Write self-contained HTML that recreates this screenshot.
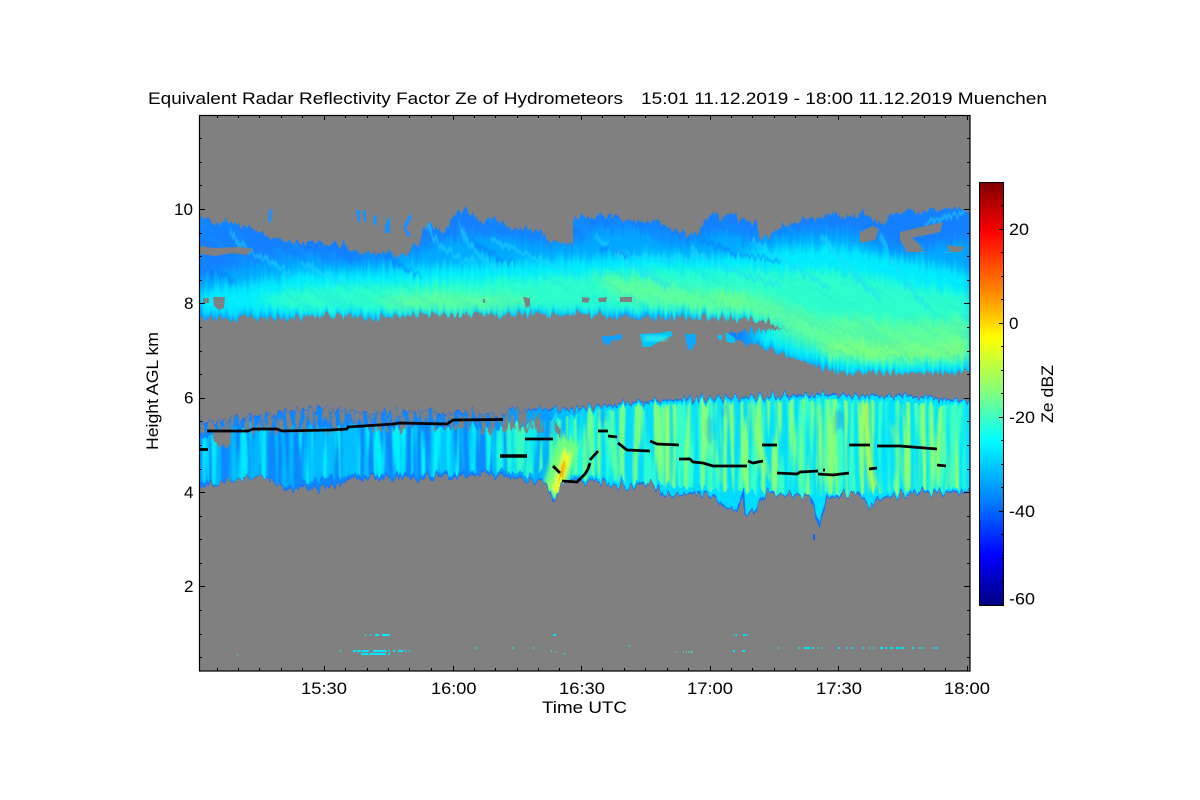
<!DOCTYPE html>
<html><head><meta charset="utf-8"><title>Equivalent Radar Reflectivity Factor</title>
<style>
html,body{margin:0;padding:0;background:#fff;width:1200px;height:800px;overflow:hidden}
svg{display:block}
text{font-family:"Liberation Sans",sans-serif;font-size:17px;fill:#000}
</style></head><body>
<svg width="1200" height="800" viewBox="0 0 1200 800" xmlns="http://www.w3.org/2000/svg">
<defs>
<path id="pu" d="M199,218 L215,221 230,223 245,226 260,232 270,238 280,242 295,243 310,243 325,243 337,242 353,247 363,255 375,253 390,253 400,256 407,258 413,245 420,242 424,228 431,224 437,230 443,233 450,222 457,213 467,210 472,217 480,221 490,218 500,220 510,228 525,229 537,230 548,238 557,243 567,243 573,240 573,222 581,217 590,218 602,216 613,215 620,219 627,223 640,221 650,223 660,222 670,228 680,232 690,235 697,233 705,222 713,215 722,219 733,213 738,220 748,222 757,223 760,240 768,236 773,232 782,227 790,225 803,217 815,219 833,215 848,217 863,213 873,220 885,222 893,213 905,213 923,210 940,211 957,208 967,213 970,215 L970,370 957,373 940,373 910,373 870,373 837,372 817,367 803,360 780,353 760,347 737,340 726,334 737,332 770,330 800,329 780,329 770,322 717,318 677,318 650,318 623,318 590,314 557,315 490,315 453,314 370,318 320,315 290,319 240,318 199,319 Z"/>
<path id="pl" d="M199,430 L203,419 233,420 247,417 285,412 323,408 357,413 397,412 423,412 470,414 503,415 510,410 557,410 590,408 640,402 680,400 723,398 770,397 823,395 880,396 923,397 970,402 L970,492 923,492 880,498 870,507 857,492 827,498 820,527 810,495 793,495 767,493 753,512 745,512 743,492 737,510 727,510 713,495 690,493 665,497 653,483 630,487 590,480 575,479 562,482 553,502 547,485 537,480 490,475 423,477 357,477 323,488 290,488 257,476 223,482 199,488 Z"/>
<clipPath id="cu"><use href="#pu"/></clipPath>
<clipPath id="cl"><use href="#pl"/></clipPath>
<clipPath id="cli"><path d="M199,438 L250,426 500,428 560,418 590,412 640,406 723,402 823,399 970,405 L970,488 880,492 820,495 720,490 630,482 590,476 500,472 357,474 290,484 199,483 Z"/></clipPath>
<clipPath id="plot"><rect x="199" y="115" width="771" height="556"/></clipPath>
<linearGradient id="cb" x1="0" y1="0" x2="0" y2="1">
<stop offset="0" stop-color="#800000"/><stop offset=".118" stop-color="#ff0000"/><stop offset=".277" stop-color="#ff9a00"/><stop offset=".367" stop-color="#ffff00"/><stop offset=".498" stop-color="#80ff80"/><stop offset=".609" stop-color="#00ffff"/><stop offset=".751" stop-color="#0080ff"/><stop offset=".882" stop-color="#0000ff"/><stop offset="1" stop-color="#000080"/>
</linearGradient>
<linearGradient id="lb" gradientUnits="userSpaceOnUse" x1="199" y1="0" x2="970" y2="0">
<stop offset="0" stop-color="#0c88ff"/><stop offset=".36" stop-color="#0c88ff"/><stop offset=".43" stop-color="#00a8ff"/><stop offset=".52" stop-color="#00d8ff"/><stop offset="1" stop-color="#00e4ff"/>
</linearGradient>
<linearGradient id="ls1" gradientUnits="userSpaceOnUse" x1="199" y1="0" x2="970" y2="0">
<stop offset="0" stop-color="#00b4ff"/><stop offset=".36" stop-color="#00c8ff"/><stop offset=".46" stop-color="#10f8e8"/><stop offset=".6" stop-color="#30ffd0"/><stop offset="1" stop-color="#40ffc0"/>
</linearGradient>
<linearGradient id="ls2" gradientUnits="userSpaceOnUse" x1="199" y1="0" x2="970" y2="0">
<stop offset="0" stop-color="#00e8ff"/><stop offset=".36" stop-color="#00f4f8"/><stop offset=".46" stop-color="#60ff98"/><stop offset=".6" stop-color="#80ff80"/><stop offset="1" stop-color="#90ff70"/>
</linearGradient>
<filter id="b2" x="-20%" y="-20%" width="140%" height="140%"><feGaussianBlur stdDeviation="2"/></filter>
<filter id="b5" filterUnits="userSpaceOnUse" x="150" y="150" width="870" height="300"><feGaussianBlur stdDeviation="5"/></filter>
<filter id="b3" filterUnits="userSpaceOnUse" x="150" y="150" width="870" height="400"><feGaussianBlur stdDeviation="2"/></filter>
<filter id="b1" filterUnits="userSpaceOnUse" x="150" y="150" width="870" height="400"><feGaussianBlur stdDeviation="1.2"/></filter>
<filter id="jagU" filterUnits="userSpaceOnUse" x="199" y="180" width="771" height="220" color-interpolation-filters="sRGB">
<feTurbulence type="fractalNoise" baseFrequency=".28 .03" numOctaves="2" seed="4" result="n"/>
<feColorMatrix in="n" values="1 0 0 0 0 0 0 0 0 .5 0 0 1 0 0 0 0 0 0 1" result="m"/>
<feDisplacementMap in="SourceGraphic" in2="m" scale="16" xChannelSelector="G" yChannelSelector="R"/>
</filter>
<filter id="jagL" filterUnits="userSpaceOnUse" x="199" y="380" width="771" height="170" color-interpolation-filters="sRGB">
<feTurbulence type="fractalNoise" baseFrequency=".24 .02" numOctaves="2" seed="9" result="n"/>
<feColorMatrix in="n" values="1 0 0 0 0 0 0 0 0 .5 0 0 1 0 0 0 0 0 0 1" result="m"/>
<feDisplacementMap in="SourceGraphic" in2="m" scale="18" xChannelSelector="G" yChannelSelector="R"/>
</filter>
<filter id="st1" filterUnits="userSpaceOnUse" x="199" y="380" width="771" height="170" color-interpolation-filters="sRGB">
<feTurbulence type="fractalNoise" baseFrequency=".14 .008" numOctaves="2" seed="3"/>
<feColorMatrix values="0 0 0 0 0 0 0 0 0 0 0 0 0 0 0 6 0 0 0 -2.6"/>
<feComposite in="SourceGraphic" operator="in"/>
<feGaussianBlur stdDeviation=".8 0"/>
</filter>
<filter id="st2" filterUnits="userSpaceOnUse" x="199" y="380" width="771" height="170" color-interpolation-filters="sRGB">
<feTurbulence type="fractalNoise" baseFrequency=".18 .008" numOctaves="2" seed="12"/>
<feColorMatrix values="0 0 0 0 0 0 0 0 0 0 0 0 0 0 0 7 0 0 0 -3.6"/>
<feComposite in="SourceGraphic" operator="in"/>
<feGaussianBlur stdDeviation=".8 0"/>
</filter>
<filter id="st3" filterUnits="userSpaceOnUse" x="199" y="400" width="400" height="40" color-interpolation-filters="sRGB">
<feTurbulence type="fractalNoise" baseFrequency=".22 .05" numOctaves="2" seed="21"/>
<feColorMatrix values="0 0 0 0 0 0 0 0 0 0 0 0 0 0 0 9 0 0 0 -4.1"/>
<feComposite in="SourceGraphic" operator="in"/>
</filter>
<filter id="st4" filterUnits="userSpaceOnUse" x="100" y="100" width="1000" height="400" color-interpolation-filters="sRGB">
<feTurbulence type="fractalNoise" baseFrequency=".012 .16" numOctaves="2" seed="7"/>
<feColorMatrix values="0 0 0 0 0 0 0 0 0 0 0 0 0 0 0 6 0 0 0 -3"/>
<feComposite in="SourceGraphic" operator="in"/>
</filter>
</defs>
<rect width="1200" height="800" fill="#fff"/>
<rect x="199" y="115" width="771" height="556" fill="#808080"/>

<g clip-path="url(#plot)">
<!-- upper cloud -->
<g filter="url(#jagU)">
<use href="#pu" fill="#1480ff"/>
<g clip-path="url(#cu)">
<path filter="url(#b5)" fill="#00a8ff" d="M199,276 L230,270 260,262 300,258 350,262 400,258 430,245 470,235 510,240 570,245 600,230 640,232 680,245 720,232 760,240 800,232 850,232 900,252 970,240 L970,370 900,372 840,370 800,358 770,350 745,338 770,328 720,316 600,312 500,313 400,315 300,316 199,316 Z"/>
<path filter="url(#b5)" fill="#00eeff" d="M199,290 L240,285 300,272 350,272 400,268 460,265 520,262 590,258 650,255 700,258 760,250 830,245 900,258 970,272 L970,372 900,374 840,372 800,358 770,347 745,337 770,328 720,316 600,312 500,313 400,315 300,316 199,314 Z"/>
<path filter="url(#b5)" fill="#30ffc8" d="M250,300 L300,288 350,285 420,282 500,278 590,275 650,268 710,270 770,270 840,270 900,282 970,295 L970,362 900,365 840,362 800,345 760,335 800,320 740,312 650,310 500,310 400,311 300,311 Z" opacity=".9"/>
<path filter="url(#b5)" fill="#80ff80" opacity=".6" d="M370,300 L430,292 500,295 540,300 500,310 400,310 Z M590,272 L650,280 700,290 760,296 820,315 900,322 970,318 L970,360 880,362 830,358 800,340 750,315 680,310 620,298 Z"/>
<path filter="url(#b5)" fill="#a0ff60" opacity=".5" d="M820,345 L880,342 930,346 965,340 965,358 880,358 830,356 Z M715,292 L750,296 745,302 715,298 Z"/>
<g transform="rotate(28 585 290)"><rect x="100" y="100" width="1000" height="400" fill="#00c8ff" filter="url(#st4)" opacity=".14"/></g>
<g fill="none" stroke="#20d8ff" stroke-width="3" filter="url(#b1)" opacity=".7">
<path d="M428,225 Q438,255 475,262"/><path d="M460,225 Q470,255 500,270"/><path d="M490,240 Q530,255 570,272"/><path d="M595,235 Q630,270 670,285"/><path d="M610,250 Q650,262 700,258"/><path d="M690,250 Q730,275 780,285"/><path d="M750,240 Q790,265 830,290"/><path d="M820,235 Q850,270 880,300"/><path d="M880,235 Q900,280 930,310"/><path d="M300,262 Q330,275 345,288"/><path d="M230,232 Q250,255 290,272"/><path d="M925,225 Q950,215 965,214"/>
</g>
<g fill="none" stroke="#0a70ff" stroke-width="3" filter="url(#b1)" opacity=".6">
<path d="M600,248 Q620,250 628,258"/><path d="M700,240 Q740,255 780,262"/><path d="M385,256 Q405,270 420,275"/><path d="M205,270 Q225,272 235,285"/><path d="M470,240 Q490,258 515,262"/>
</g>
</g>
</g>
<!-- gaps drawn crisp -->
<path fill="#808080" d="M199,246 L215,248 240,247 253,249 247,255 232,253 215,256 199,254 Z"/>
<path fill="#808080" d="M860,232 L873,226 879,229 875,240 860,243 Z M900,232 L943,222 940,232 912,238 920,245 923,252 907,252 900,240 Z M947,245 L965,247 960,252 950,252 Z"/>
<path fill="#808080" d="M213,297 L225,297 224,308 219,310 214,306 Z M523,297 L530,298 530,306 526,308 Z M620,297 L632,297 632,302 620,302 Z M582,297 L590,298 588,303 582,302 Z M598,298 L607,297 606,302 599,302 Z"/>
<path fill="#808080" d="M203,298 L209,298 209,303 203,303 Z M483,299 h2 v4 h-2 Z"/>
<!-- tufts above and side patches -->
<g fill="#1890ff">
<path d="M269,209 L272,210 271,222 268,222 Z"/><path d="M356,210 L360,210 360,222 358,222 Z"/><path d="M363,210 L366,211 366,222 364,222 Z"/><path d="M374,215 L377,216 376,225 373,225 Z"/><path d="M388,217 L390,218 390,233 385,233 385,226 Z"/><path d="M411,213 L412,218 406,228 412,237 407,236 403,226 Z"/>
</g>
<g fill="#00c8ff">
<path d="M602,336 L612,336 622,334 622,339 612,341 608,346 605,343 602,342 Z" fill="#10a0ff"/>
<path d="M640,334 L660,333 671,331 672,336 660,341 650,347 643,347 Z"/>
<path d="M685,334 L696,334 696,342 692,350 689,350 686,342 Z" fill="#10a8ff"/>
<path d="M718,335 L722,335 722,340 718,339 Z M725,332 L735,338 735,343 727,342 Z"/>
</g>
<rect x="644" y="336" width="22" height="5" fill="#30f0e0" filter="url(#b2)"/>

<!-- lower cloud -->
<g filter="url(#jagL)">
<use href="#pl" fill="url(#lb)"/>
<use href="#pl" fill="none" stroke="#1470ff" stroke-width="1.5"/>
<g clip-path="url(#cl)">
<g clip-path="url(#cli)">
<rect x="199" y="395" width="771" height="140" fill="url(#ls1)" filter="url(#st1)"/>
<rect x="199" y="395" width="771" height="140" fill="url(#ls2)" filter="url(#st2)"/>
</g>
<g filter="url(#b3)">
<path d="M664,408 Q668,440 668,486" stroke="#b0ff50" stroke-width="6" fill="none" opacity=".65"/>
<path d="M706,420 Q712,450 722,480" stroke="#90ff70" stroke-width="5" fill="none" opacity=".6"/>
<path d="M752,405 Q755,445 770,482" stroke="#a0ff60" stroke-width="6" fill="none" opacity=".6"/>
<path d="M818,405 Q820,445 828,486" stroke="#a0ff60" stroke-width="6" fill="none" opacity=".6"/>
<path d="M866,402 Q866,450 874,490" stroke="#e0ff20" stroke-width="5" fill="none"/>
<path d="M892,425 Q900,455 905,485" stroke="#90ff70" stroke-width="5" fill="none" opacity=".6"/>
<path d="M940,420 Q945,455 950,485" stroke="#80ff80" stroke-width="5" fill="none" opacity=".6"/>
<path d="M606,420 Q612,450 620,478" stroke="#70ff90" stroke-width="7" fill="none" opacity=".6"/>
<path d="M570,440 Q562,460 552,496" stroke="#70ff80" stroke-width="22" fill="none"/>
<path d="M567,452 Q564,468 555,490" stroke="#f0ff10" stroke-width="8" fill="none"/>
</g>
<path d="M564,462 Q563,470 560,478" stroke="#ff9800" stroke-width="3" fill="none" filter="url(#b1)"/>
<g filter="url(#b3)" fill="#0a78ff" opacity=".4">
<path d="M707,420 h5 v20 h-5 Z M835,410 h8 v20 h-8 Z M722,405 h4 v10 h-4 Z M600,410 h6 v14 h-6 Z M540,412 h14 v24 h-14 Z"/>
</g>
<rect x="199" y="404" width="345" height="27" fill="#808080" filter="url(#st3)"/>
<path fill="#808080" d="M212,428 L232,428 230,444 222,449 215,440 Z M555,428 L561,428 560,437 555,436 Z"/>
</g>
</g>
<rect x="813" y="534" width="2" height="6" fill="#1060ff"/>

<!-- sparse low-level echoes -->
<path fill="none" stroke="#00e8ff" stroke-width="2" d="M365 635h1M370 635h1M375 635h4M382 635h8M340 651h1M353 651h3M357 651h4M362 651h7M373 651h14M389 651h1M393 651h2M398 651h5M405 651h1M409 651h1M361 654h7M369 654h17M388 654h2M476 648h1M512 648h1M533 648h1M551 651h1M553 635h3M564 654h1M629 646h1M734 635h1M736 635h1M743 635h3M747 635h1M733 651h2M742 651h3M778 648h1M799 648h1M804 648h6M812 648h2M818 648h1M822 648h1M838 648h2M847 648h1M850 648h1M852 648h1M863 648h1M869 648h1M873 648h1M880 648h3M885 648h2M890 648h3M896 648h4M901 648h3M912 648h2M919 648h1M921 648h1M923 648h1M932 648h1M934 648h1M936 648h1"/>
<path fill="none" stroke="#40ffb0" stroke-width="1" d="M237 655h1M556 652h1M676 652h1M683 652h1M686 652h1M688 652h1M690 652h3"/>

<!-- black lines -->
<g fill="none" stroke="#000" stroke-width="2.8" stroke-linejoin="round">
<path d="M207,431 L248,431 253,429 277,429 282,431 330,430 347,429 348,427 393,424 400,423 447,424 453,420 503,419.5"/>
<path d="M200,449.5 H208"/>
<path d="M525,439 H553"/>
<path d="M500,456 H527" stroke-width="3.5"/>
<path d="M553,466 L560,473"/>
<path d="M562,481 L577,482 585,474 588,469 590,463"/>
<path d="M590,460 L598,451"/>
<path d="M598,431 H608"/><path d="M608,436 L617,437"/><path d="M618,443 L627,450 650,451"/>
<path d="M650,441 L657,444 679,445"/>
<path d="M679,459 L690,459 693,462 703,463 713,466 747,466"/>
<path d="M748,461 L753,463 763,461"/>
<path d="M762,445 H777"/>
<path d="M777,473 L797,474 800,472 818,471"/>
<path d="M818,474 L833,475 849,473"/><path d="M823,470 h2"/>
<path d="M849,445 H870"/>
<path d="M877,446 L900,446 937,449"/>
<path d="M869,469 L877,468"/>
<path d="M937,465 L946,466"/>
</g>
</g>

<!-- plot box and ticks -->
<rect x="199.5" y="115.5" width="770.5" height="555.5" fill="none" stroke="#000" stroke-width="1.2"/>
<g fill="none" stroke="#000" stroke-width="1" shape-rendering="crispEdges">
<path d="M199 209.5h6M199 303.5h6M199 398.5h6M199 492.5h6M199 586.5h6M970 209.5h-6M970 303.5h-6M970 398.5h-6M970 492.5h-6M970 586.5h-6"/>
<path d="M199 138.5h3M199 162.5h3M199 185.5h3M199 233.5h3M199 256.5h3M199 280.5h3M199 327.5h3M199 351.5h3M199 374.5h3M199 421.5h3M199 445.5h3M199 469.5h3M199 516.5h3M199 539.5h3M199 563.5h3M199 610.5h3M199 634.5h3M199 657.5h3M970 138.5h-3M970 162.5h-3M970 185.5h-3M970 233.5h-3M970 256.5h-3M970 280.5h-3M970 327.5h-3M970 351.5h-3M970 374.5h-3M970 421.5h-3M970 445.5h-3M970 469.5h-3M970 516.5h-3M970 539.5h-3M970 563.5h-3M970 610.5h-3M970 634.5h-3M970 657.5h-3"/>
<path d="M324.5 671v-5M453.5 671v-5M581.5 671v-5M710.5 671v-5M838.5 671v-5M967.5 671v-5M324.5 115v5M453.5 115v5M581.5 115v5M710.5 115v5M838.5 115v5M967.5 115v5"/>
<path d="M217.5 671v-3M238.5 671v-3M259.5 671v-3M281.5 671v-3M302.5 671v-3M345.5 671v-3M367.5 671v-3M388.5 671v-3M409.5 671v-3M431.5 671v-3M474.5 671v-3M495.5 671v-3M517.5 671v-3M538.5 671v-3M559.5 671v-3M602.5 671v-3M624.5 671v-3M645.5 671v-3M667.5 671v-3M688.5 671v-3M731.5 671v-3M752.5 671v-3M774.5 671v-3M795.5 671v-3M817.5 671v-3M860.5 671v-3M881.5 671v-3M902.5 671v-3M924.5 671v-3M945.5 671v-3"/>
<path d="M217.5 115v3M238.5 115v3M259.5 115v3M281.5 115v3M302.5 115v3M345.5 115v3M367.5 115v3M388.5 115v3M409.5 115v3M431.5 115v3M474.5 115v3M495.5 115v3M517.5 115v3M538.5 115v3M559.5 115v3M602.5 115v3M624.5 115v3M645.5 115v3M667.5 115v3M688.5 115v3M731.5 115v3M752.5 115v3M774.5 115v3M795.5 115v3M817.5 115v3M860.5 115v3M881.5 115v3M902.5 115v3M924.5 115v3M945.5 115v3"/>
</g>

<!-- colorbar -->
<rect x="979.5" y="182.5" width="24" height="423" fill="url(#cb)" stroke="#000" stroke-width="1"/>
<path fill="none" stroke="#000" shape-rendering="crispEdges" d="M1003 205.5h-2M1003 229.5h-4M1003 252.5h-2M1003 276.5h-2M1003 299.5h-2M1003 323.5h-4M1003 346.5h-2M1003 370.5h-2M1003 393.5h-2M1003 417.5h-4M1003 440.5h-2M1003 464.5h-2M1003 487.5h-2M1003 511.5h-4M1003 534.5h-2M1003 558.5h-2M1003 581.5h-2"/>

<!-- text -->
<text x="148" y="104" textLength="475" lengthAdjust="spacingAndGlyphs">Equivalent Radar Reflectivity Factor Ze of Hydrometeors</text>
<text x="641" y="104" textLength="406" lengthAdjust="spacingAndGlyphs">15:01 11.12.2019 - 18:00 11.12.2019 Muenchen</text>
<text x="301" y="694" textLength="46" lengthAdjust="spacingAndGlyphs">15:30</text>
<text x="431" y="694" textLength="45.5" lengthAdjust="spacingAndGlyphs">16:00</text>
<text x="559" y="694" textLength="46" lengthAdjust="spacingAndGlyphs">16:30</text>
<text x="687" y="694" textLength="46" lengthAdjust="spacingAndGlyphs">17:00</text>
<text x="816" y="694" textLength="46" lengthAdjust="spacingAndGlyphs">17:30</text>
<text x="944" y="694" textLength="46" lengthAdjust="spacingAndGlyphs">18:00</text>
<text x="542" y="713" textLength="85" lengthAdjust="spacingAndGlyphs">Time UTC</text>
<text x="174" y="215" textLength="19" lengthAdjust="spacingAndGlyphs">10</text>
<text x="184" y="309" textLength="9.5" lengthAdjust="spacingAndGlyphs">8</text>
<text x="184" y="403.5" textLength="9.5" lengthAdjust="spacingAndGlyphs">6</text>
<text x="184" y="498" textLength="9.5" lengthAdjust="spacingAndGlyphs">4</text>
<text x="184" y="592" textLength="9.5" lengthAdjust="spacingAndGlyphs">2</text>
<text transform="translate(158 450) rotate(-90)" textLength="118" lengthAdjust="spacingAndGlyphs">Height AGL km</text>
<text x="1009" y="235" textLength="20" lengthAdjust="spacingAndGlyphs">20</text>
<text x="1009" y="329" textLength="9.5" lengthAdjust="spacingAndGlyphs">0</text>
<text x="1009" y="423" textLength="26" lengthAdjust="spacingAndGlyphs">-20</text>
<text x="1009" y="517" textLength="26" lengthAdjust="spacingAndGlyphs">-40</text>
<text x="1009" y="604.5" textLength="26" lengthAdjust="spacingAndGlyphs">-60</text>
<text transform="translate(1053 423) rotate(-90)" textLength="58" lengthAdjust="spacingAndGlyphs">Ze dBZ</text>
</svg>
</body></html>
